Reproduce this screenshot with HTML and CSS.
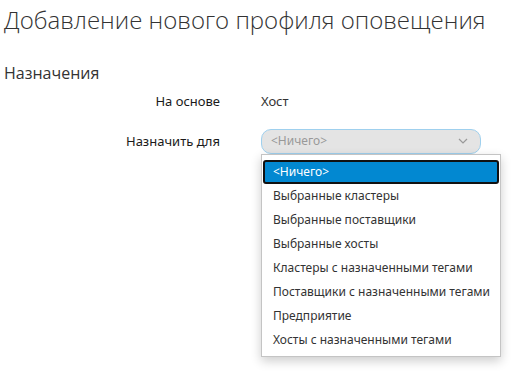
FILE: index.html
```html
<!DOCTYPE html>
<html>
<head>
	<title>Добавление нового профиля оповещения</title>
	<link rel="stylesheet" href="styles.css">
</head>
<body>
	<h1 class="page-title">Добавление нового профиля оповещения</h1>
	<h2 class="section-title">Назначения</h2>
	<div class="form-grid">
		<div class="form-label">На основе</div>
		<div class="form-value">Хост</div>

		<div class="form-label">Назначить для</div>
		<div class="form-value">
			<div class="picker">
				<div class="picker-box">
					<span class="picker-text">&lt;Ничего&gt;</span>
					<svg class="chevron" width="10" height="6" viewBox="0 0 10 6"><path d="M1 1 L5 5 L9 1" fill="none" stroke="#999" stroke-width="1.2"/></svg>
				</div>
				<div class="menu">
					<div class="menu-item current">&lt;Ничего&gt;</div>
					<div class="menu-item">Выбранные кластеры</div>
					<div class="menu-item">Выбранные поставщики</div>
					<div class="menu-item">Выбранные хосты</div>
					<div class="menu-item">Кластеры с назначенными тегами</div>
					<div class="menu-item">Поставщики с назначенными тегами</div>
					<div class="menu-item">Предприятие</div>
					<div class="menu-item">Хосты с назначенными тегами</div>
				</div>
			</div>
		</div>
	</div>
</body>
</html>
```

FILE: styles.css
```css
html, body {
	height: 100%;
}
body {
	margin: 0;
	padding: 0 4px;
	min-height: 373px;
	box-sizing: border-box;
	background-color: #fff;
	color: #333;
	font-family: "Open Sans", "Noto Sans", sans-serif;
}
.page-title {
	margin: 2px 0 0;
	font-size: 24px;
	font-weight: 300;
	line-height: 36px;
	color: #333;
}
.section-title {
	margin: 24px 0 0;
	font-size: 16px;
	font-weight: 400;
	line-height: 22px;
	color: #333;
}
.form-grid {
	display: grid;
	grid-template-columns: 216px 220px;
	column-gap: 41px;
	row-gap: 14px;
	margin-top: 4px;
	font-family: "Noto Sans", sans-serif;
	font-size: 13px;
}
.form-label {
	font-weight: 400;
	color: #1a1a1a;
	line-height: 26px;
	display: flex;
	align-items: center;
	justify-content: flex-end;
}
.form-value {
	line-height: 26px;
	display: flex;
	align-items: center;
}
.picker {
	position: relative;
	width: 220px;
}
.picker-box {
	display: flex;
	align-items: center;
	justify-content: space-between;
	height: 25px;
	box-sizing: border-box;
	padding: 0 12px 0 9px;
	background-color: #e4e4e4;
	border: 1px solid #9fd0ee;
	border-radius: 10px;
	font-size: 12px;
}
.picker-text {
	color: #999;
}
.menu {
	position: absolute;
	z-index: 2;
	left: 0;
	top: 25px;
	width: 240px;
	box-sizing: border-box;
	padding: 5px 1px 4px;
	background-color: #fff;
	border: 1px solid #c4c4c4;
	box-shadow: 0 4px 10px rgba(0,0,0,0.2);
	font-size: 12px;
}
.menu-item {
	height: 24px;
	line-height: 24px;
	padding: 0 10px;
	color: #333;
	white-space: nowrap;
}
.menu-item.current {
	box-sizing: border-box;
	line-height: 20px;
	padding: 0 8px;
	background-color: #0288d1;
	color: #fff;
	border: 2px solid #111;
	border-radius: 3px;
}
```
